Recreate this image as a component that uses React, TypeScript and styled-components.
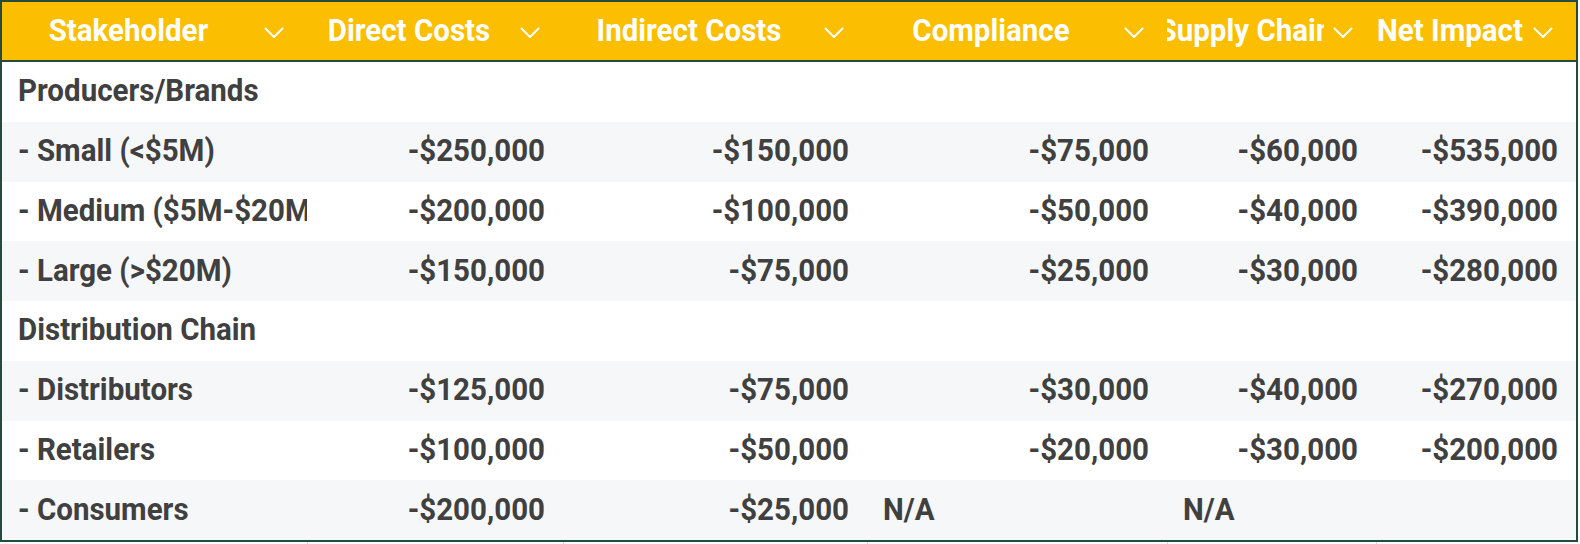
import { ReactElement } from 'react';
import styled, { createGlobalStyle } from 'styled-components';

const GlobalStyle = createGlobalStyle`
  html, body {
    margin: 0;
    padding: 0;
    background: #fff;
  }
  body {
    font-family: Roboto, 'Liberation Sans', Arial, sans-serif;
  }
`;

const COLUMNS = '305px 256px 304px 300px 209px 200px';

const Page = styled.div`
  width: 1580px;
  height: 544px;
  overflow: hidden;
  background: #fff;
`;

const Table = styled.div`
  width: 1578px;
  box-sizing: border-box;
  border: 2px solid #234c3c;
`;

const HeaderRow = styled.div`
  display: grid;
  grid-template-columns: ${COLUMNS};
  height: 58px;
  background: #fbbe00;
  border-bottom: 2px solid #234c3c;
`;

const HeaderCell = styled.div`
  display: flex;
  align-items: center;
  padding-right: 14px;
  min-width: 0;
  color: #fff;
  font-size: 29.5px;
  font-weight: 700;
`;

const HeaderLabel = styled.div`
  flex: 1;
  min-width: 0;
  display: flex;
  justify-content: center;
  overflow: hidden;
  white-space: nowrap;
  padding-bottom: 3px;
  span {
    flex-shrink: 0;
    display: inline-block;
    transform: scaleY(1.08);
  }
`;

const SortToggle = styled.div`
  width: 38px;
  display: flex;
  justify-content: center;
  align-items: center;
  padding-top: 4px;
`;

const Row = styled.div<{ striped: boolean }>`
  display: grid;
  grid-template-columns: ${COLUMNS};
  height: 59.75px;
  background: ${({ striped }) => (striped ? '#f6f7f9' : '#fff')};
`;

const Cell = styled.div<{ align?: 'left' | 'right' }>`
  display: flex;
  align-items: center;
  justify-content: ${({ align }) => (align === 'right' ? 'flex-end' : 'flex-start')};
  padding: 0 18px 3px 16px;
  min-width: 0;
  overflow: hidden;
  white-space: nowrap;
  color: #404040;
  font-size: 29.5px;
  font-weight: 700;
  span {
    display: inline-block;
    flex-shrink: 0;
    transform: scaleY(1.08);
  }
`;

const NextRow = styled.div`
  display: grid;
  grid-template-columns: 307px 256px 304px 300px 209px 202px;
  height: 2px;
  > div + div {
    border-left: 1px solid #dcdcdc;
  }
`;

const Chevron = (): ReactElement => (
  <svg width="20" height="12" viewBox="0 0 20 12" fill="none">
    <polyline
      points="1.5,1.5 10,10 18.5,1.5"
      stroke="#fff"
      strokeWidth="2"
      strokeLinecap="round"
      strokeLinejoin="round"
    />
  </svg>
);

const headers = [
  'Stakeholder',
  'Direct Costs',
  'Indirect Costs',
  'Compliance',
  'Supply Chain',
  'Net Impact',
];

type Value = { text: string; align: 'left' | 'right' };

const money = (text: string): Value => ({ text, align: 'right' });
const na: Value = { text: 'N/A', align: 'left' };
const empty: Value = { text: '', align: 'left' };

const rows: { label: string; values: Value[] }[] = [
  { label: 'Producers/Brands', values: [] },
  {
    label: '- Small (<$5M)',
    values: ['-$250,000', '-$150,000', '-$75,000', '-$60,000', '-$535,000'].map(money),
  },
  {
    label: '- Medium ($5M-$20M)',
    values: ['-$200,000', '-$100,000', '-$50,000', '-$40,000', '-$390,000'].map(money),
  },
  {
    label: '- Large (>$20M)',
    values: ['-$150,000', '-$75,000', '-$25,000', '-$30,000', '-$280,000'].map(money),
  },
  { label: 'Distribution Chain', values: [] },
  {
    label: '- Distributors',
    values: ['-$125,000', '-$75,000', '-$30,000', '-$40,000', '-$270,000'].map(money),
  },
  {
    label: '- Retailers',
    values: ['-$100,000', '-$50,000', '-$20,000', '-$30,000', '-$200,000'].map(money),
  },
  {
    label: '- Consumers',
    values: [money('-$200,000'), money('-$25,000'), na, na, empty],
  },
];

export default function App(): ReactElement {
  return (
    <Page>
      <GlobalStyle />
      <Table>
        <HeaderRow>
          {headers.map((h) => (
            <HeaderCell key={h}>
              <HeaderLabel>
                <span>{h}</span>
              </HeaderLabel>
              <SortToggle>
                <Chevron />
              </SortToggle>
            </HeaderCell>
          ))}
        </HeaderRow>
        {rows.map((row, i) => (
          <Row key={row.label} striped={i % 2 === 1}>
            <Cell>
              <span>{row.label}</span>
            </Cell>
            {Array.from({ length: 5 }).map((_, c) => {
              const v = row.values[c] ?? empty;
              return (
                <Cell key={c} align={v.align}>
                  {v.text && <span>{v.text}</span>}
                </Cell>
              );
            })}
          </Row>
        ))}
      </Table>
      <NextRow>
        {headers.map((h) => (
          <div key={h} />
        ))}
      </NextRow>
    </Page>
  );
}
